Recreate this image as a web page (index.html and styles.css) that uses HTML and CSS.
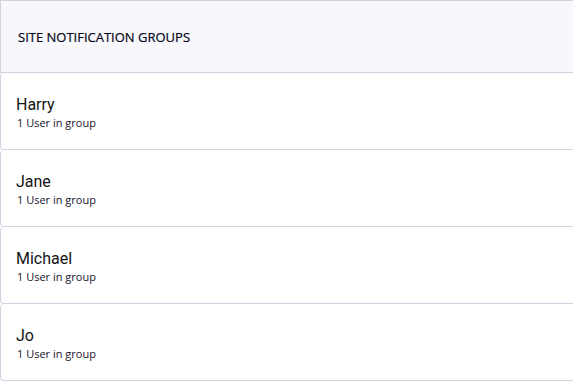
FILE: index.html
```html
<!DOCTYPE html>
<html lang="en">
<head>
  <meta charset="UTF-8">
  <title>Site Notification Groups</title>
  <meta name="viewport" content="width=device-width, initial-scale=1">
  <link rel="stylesheet" href="styles.css">
</head>
<body>
  <div class="panel">
    <div class="panel-header">SITE NOTIFICATION GROUPS</div>
    <div class="group">
      <div class="group-name">Harry</div>
      <div class="group-count">1 User in group</div>
    </div>
    <div class="group">
      <div class="group-name">Jane</div>
      <div class="group-count">1 User in group</div>
    </div>
    <div class="group">
      <div class="group-name">Michael</div>
      <div class="group-count">1 User in group</div>
    </div>
    <div class="group">
      <div class="group-name">Jo</div>
      <div class="group-count">1 User in group</div>
    </div>
  </div>
</body>
</html>
```

FILE: styles.css
```css
body {
  background: #fff;
  font-family: 'Open Sans', Arial, sans-serif;
  margin: 0;
  overflow: hidden;
}
.panel {
  margin-right: -10px;
  border-top: 1px solid #d4d2e2;
}
.panel-header {
  display: flex;
  align-items: center;
  height: 71px;
  padding: 0 17px;
  background: #f8f8fc;
  border-left: 1px solid #d4d2e2;
  border-bottom: 1px solid #d4d2e2;
  font-size: 13px;
  color: #05051a;
  -webkit-text-stroke: 0.2px #05051a;
}
.group {
  height: 77px;
  box-sizing: border-box;
  padding: 22px 15px 0;
  border-left: 1px solid #d4d2e2;
  border-bottom: 1px solid #d4d2e2;
  border-radius: 4px 0 0 4px;
}
.group-name {
  font-family: Roboto, Arial, sans-serif;
  font-size: 16px;
  line-height: 20px;
  color: #141414;
}
.group-count {
  font-size: 11px;
  line-height: 16px;
  color: #22122e;
  padding-left: 1px;
}
```
